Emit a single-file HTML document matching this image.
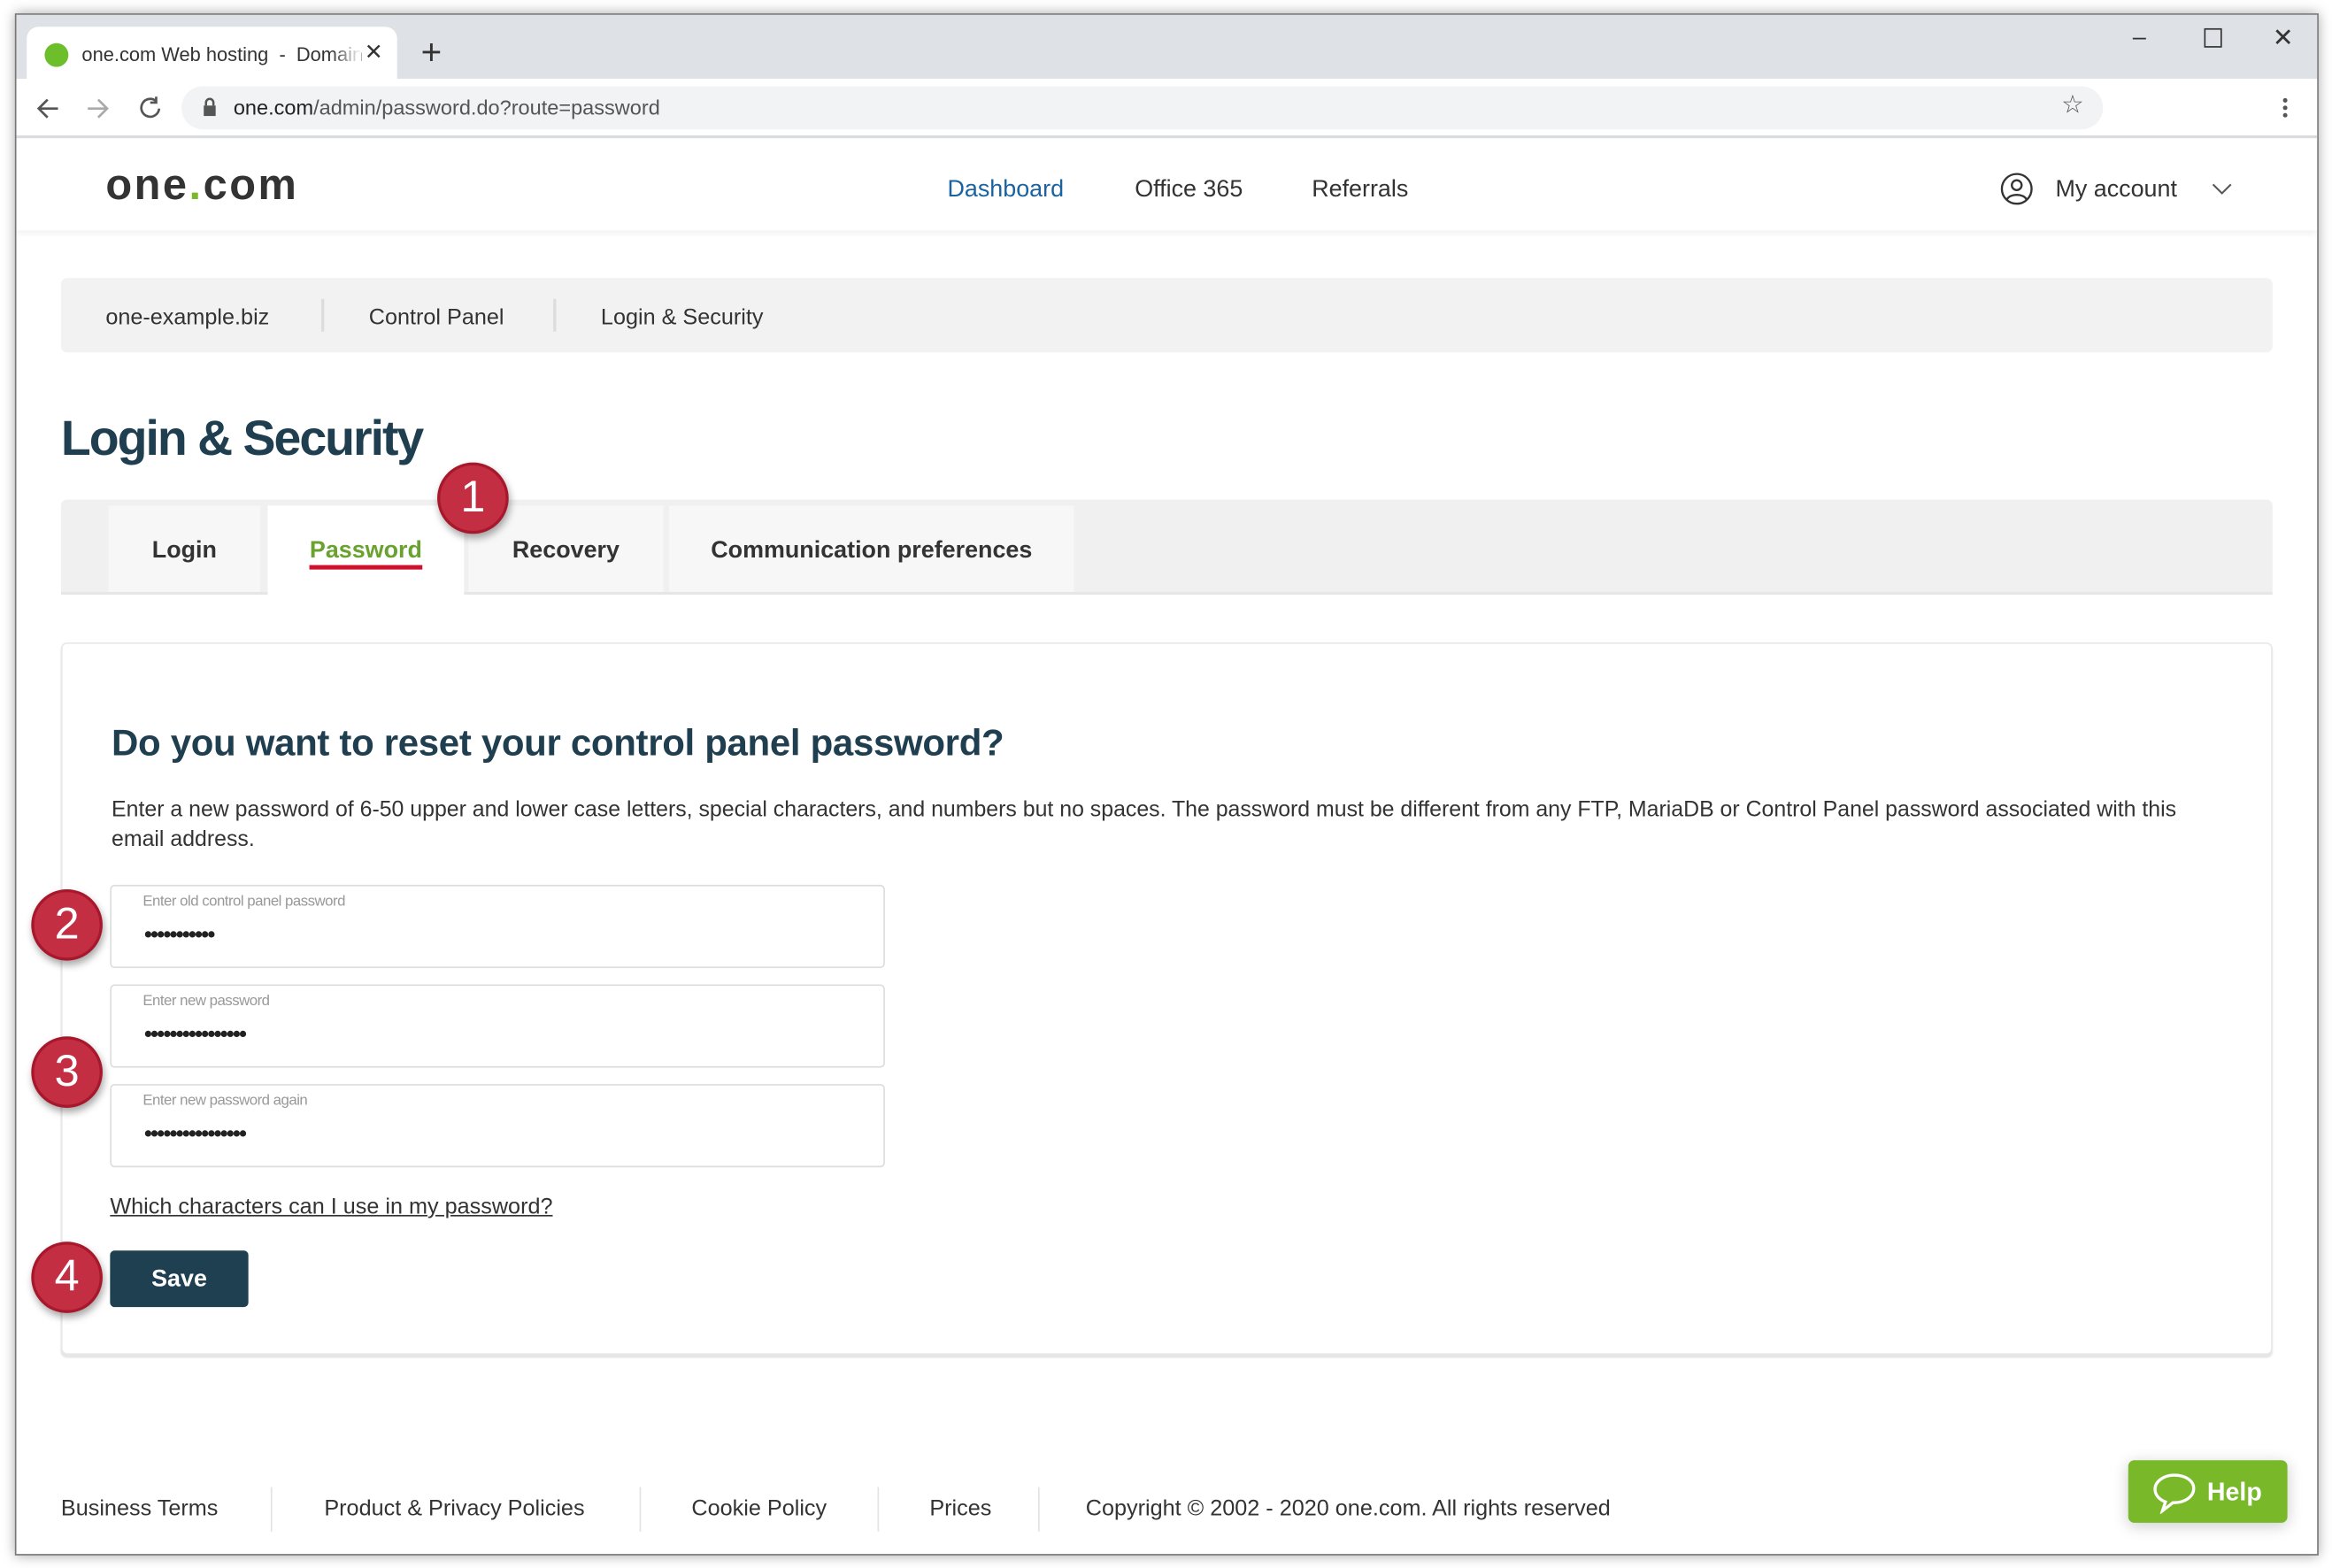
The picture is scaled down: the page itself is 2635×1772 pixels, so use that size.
<!DOCTYPE html>
<html><head><meta charset="utf-8"><style>
html,body{margin:0;padding:0;background:#fff;width:2635px;height:1772px;overflow:hidden;font-family:"Liberation Sans",sans-serif;}
#s{position:absolute;left:0;top:0;width:1568px;height:1054px;transform:scale(1.6805);transform-origin:0 0;}
.a{position:absolute;white-space:nowrap;}
.win{position:absolute;left:10px;top:9px;width:1547px;height:1035px;border:1px solid #777;box-shadow:0 0 8px rgba(0,0,0,.35);background:#fff;overflow:hidden;}
.badge{position:absolute;width:44px;height:44px;border-radius:50%;background:#c42e43;border:2px solid #a8182c;color:#fff;font-size:30px;text-align:center;line-height:44px;box-shadow:1px 3px 5px rgba(0,0,0,.35);}
.inp{position:absolute;left:63px;width:519px;height:54px;border:1px solid #ddd;border-radius:3px;background:#fff;}
.inp .l{position:absolute;left:21px;top:5px;font-size:10px;color:#999;letter-spacing:-0.3px;}
.inp .d{position:absolute;left:22px;top:24px;font-size:15px;color:#222;letter-spacing:-1px;font-weight:bold;}
.tab{position:absolute;top:4px;height:58px;background:#f7f7f7;font-weight:bold;font-size:16px;color:#333;text-align:center;line-height:62px;}
.ft{position:absolute;font-size:15px;color:#333;}
.sep{position:absolute;width:1px;background:#e3e3e3;}
</style></head><body><div id="s">
<div class="win">
 <div class="a" style="left:0;top:0;width:1547px;height:43px;background:#dee1e6;"></div>
 <div class="a" style="left:7px;top:8px;width:249px;height:36px;background:#fff;border-radius:8px 8px 0 0;"></div>
 <div class="a" style="left:19px;top:19px;width:16px;height:16px;border-radius:50%;background:#6cbf2a;"></div>
 <div class="a" style="left:44px;top:19px;font-size:13px;color:#333;">one.com Web hosting&nbsp; - &nbsp;Domain</div>
 <div class="a" style="left:212px;top:15px;width:20px;height:20px;background:linear-gradient(90deg,rgba(255,255,255,0),#fff);"></div>
 <div class="a" style="left:234px;top:16px;font-size:15px;color:#333;">✕</div>
 <div class="a" style="left:272px;top:12px;font-size:24px;color:#333;">+</div>
 <div class="a" style="left:1423px;top:7px;font-size:16px;color:#333;">–</div>
 <div class="a" style="left:1471px;top:9px;width:10px;height:11px;border:1px solid #333;"></div>
 <div class="a" style="left:1517px;top:6px;font-size:17px;color:#333;">✕</div>
 <div class="a" style="left:0;top:43px;width:1547px;height:38px;background:#fff;border-bottom:2px solid #dadce0;"></div>
 <svg class="a" style="left:12px;top:54px" width="100" height="18" viewBox="0 0 100 18"><g fill="none" stroke="#555" stroke-width="1.6"><path d="M16 9H3M9 3L3 9l6 6"/><path d="M36 9h13M43 3l6 6-6 6" stroke="#aaa"/><path d="M82 4a6 6 0 1 0 2 5M82 1v4h-4"/></g></svg>
 <div class="a" style="left:111px;top:48px;width:1292px;height:29px;background:#f1f3f4;border-radius:15px;"></div>
 <svg class="a" style="left:124px;top:55px" width="12" height="14"><rect x="2" y="6" width="8" height="7" fill="#555"/><path d="M3.5 6V4a2.5 2.5 0 0 1 5 0v2" stroke="#555" fill="none" stroke-width="1.5"/></svg>
 <div class="a" style="left:146px;top:54px;font-size:14px;color:#222;">one.com<span style="color:#555">/admin/password.do?route=password</span></div>
 <div class="a" style="left:1375px;top:51px;font-size:17px;color:#555;">☆</div>
 <div class="a" style="left:1524px;top:56px;width:3px;height:3px;background:#555;border-radius:50%;box-shadow:0 5px 0 #555,0 10px 0 #555;"></div>
 <div class="a" style="left:0;top:83px;width:1547px;height:62px;background:#fff;box-shadow:0 2px 4px rgba(0,0,0,.06);"></div>
 <div class="a" style="left:60px;top:99px;font-size:29px;font-weight:bold;color:#333;letter-spacing:1.5px;">one<span style="color:#7ab929">.</span>com</div>
 <div class="a" style="left:626px;top:109px;font-size:16px;color:#1a62a0;">Dashboard</div>
 <div class="a" style="left:752px;top:109px;font-size:16px;color:#333;">Office 365</div>
 <div class="a" style="left:871px;top:109px;font-size:16px;color:#333;">Referrals</div>
 <svg class="a" style="left:1334px;top:106px" width="22" height="22"><circle cx="11" cy="11" r="10" fill="none" stroke="#333" stroke-width="1.4"/><circle cx="11" cy="8.5" r="3.3" fill="none" stroke="#333" stroke-width="1.4"/><path d="M4.5 18c2-4 11-4 13 0" fill="none" stroke="#333" stroke-width="1.4"/></svg>
 <div class="a" style="left:1371px;top:109px;font-size:16px;color:#333;">My account</div>
 <svg class="a" style="left:1476px;top:113px" width="14" height="9"><path d="M1 1l6 6 6-6" fill="none" stroke="#555" stroke-width="1.2"/></svg>
 <div class="a" style="left:30px;top:177px;width:1487px;height:50px;background:#f2f2f2;border-radius:4px;"></div>
 <div class="a" style="left:60px;top:195px;font-size:15px;color:#333;">one-example.biz</div>
 <div class="a" style="left:205px;top:191px;width:2px;height:22px;background:#ddd;"></div>
 <div class="a" style="left:237px;top:195px;font-size:15px;color:#333;">Control Panel</div>
 <div class="a" style="left:361px;top:191px;width:2px;height:22px;background:#ddd;"></div>
 <div class="a" style="left:393px;top:195px;font-size:15px;color:#333;">Login &amp; Security</div>
 <div class="a" style="left:30px;top:266px;font-size:33px;font-weight:bold;color:#1f3f50;letter-spacing:-1.2px;">Login &amp; Security</div>
 <div class="a" style="left:30px;top:326px;width:1487px;height:62px;background:#f0f0f0;border-radius:4px 4px 0 0;border-bottom:2px solid #e6e6e6;">
  <div class="tab" style="left:32px;width:102px;">Login</div>
  <div class="tab" style="left:139px;width:132px;height:62px;background:#fff;color:#6aa22f;"><span style="border-bottom:3px solid #d0102d;padding-bottom:1px;">Password</span></div>
  <div class="tab" style="left:274px;width:131px;">Recovery</div>
  <div class="tab" style="left:409px;width:272px;">Communication preferences</div>
 </div>
 <div class="a" style="left:30px;top:422px;width:1485px;height:477px;border:1px solid #e8e8e8;border-radius:4px;box-shadow:0 2px 1px #e6e6e6;background:#fff;">
  <div class="a" style="left:33px;top:53px;font-size:25px;font-weight:bold;color:#1f3f50;letter-spacing:-0.2px;">Do you want to reset your control panel password?</div>
  <div class="a" style="left:33px;top:102px;width:1405px;white-space:normal;font-size:14.8px;line-height:20px;color:#333;">Enter a new password of 6-50 upper and lower case letters, special characters, and numbers but no spaces. The password must be different from any FTP, MariaDB or Control Panel password associated with this email address.</div>
 </div>
 <div class="inp" style="top:585px"><div class="l">Enter old control panel password</div><div class="d">•••••••••••</div></div>
 <div class="inp" style="top:652px"><div class="l">Enter new password</div><div class="d">••••••••••••••••</div></div>
 <div class="inp" style="top:719px"><div class="l">Enter new password again</div><div class="d">••••••••••••••••</div></div>
 <div class="a" style="left:63px;top:793px;font-size:15px;color:#333;text-decoration:underline;">Which characters can I use in my password?</div>
 <div class="a" style="left:63px;top:831px;width:93px;height:38px;background:#1f4050;border-radius:3px;color:#fff;font-weight:bold;font-size:16px;text-align:center;line-height:39px;">Save</div>
 <div class="ft" style="left:30px;top:996px">Business Terms</div>
 <div class="sep" style="left:171px;top:990px;height:30px"></div>
 <div class="ft" style="left:207px;top:996px">Product &amp; Privacy Policies</div>
 <div class="sep" style="left:419px;top:990px;height:30px"></div>
 <div class="ft" style="left:454px;top:996px">Cookie Policy</div>
 <div class="sep" style="left:579px;top:990px;height:30px"></div>
 <div class="ft" style="left:614px;top:996px">Prices</div>
 <div class="sep" style="left:687px;top:990px;height:30px"></div>
 <div class="ft" style="left:719px;top:996px">Copyright © 2002 - 2020 one.com. All rights reserved</div>
 <div class="a" style="left:1420px;top:972px;width:107px;height:42px;background:#79b829;border-radius:4px;box-shadow:0 2px 10px rgba(0,0,0,.2);">
  <svg class="a" style="left:16px;top:8px" width="30" height="28"><path d="M15 2C8 2 2 6 2 11.5c0 4 3 7 7 8.5l-2 6 7-5.5h1c7 0 13-4 13-9.5S22 2 15 2z" fill="none" stroke="#fff" stroke-width="2"/></svg>
  <div class="a" style="left:53px;top:12px;color:#fff;font-weight:bold;font-size:17px;">Help</div>
 </div>
</div>
<div class="badge" style="left:294px;top:311px;">1</div>
<div class="badge" style="left:21px;top:598px;">2</div>
<div class="badge" style="left:21px;top:697px;">3</div>
<div class="badge" style="left:21px;top:835px;">4</div>
</div></body></html>
